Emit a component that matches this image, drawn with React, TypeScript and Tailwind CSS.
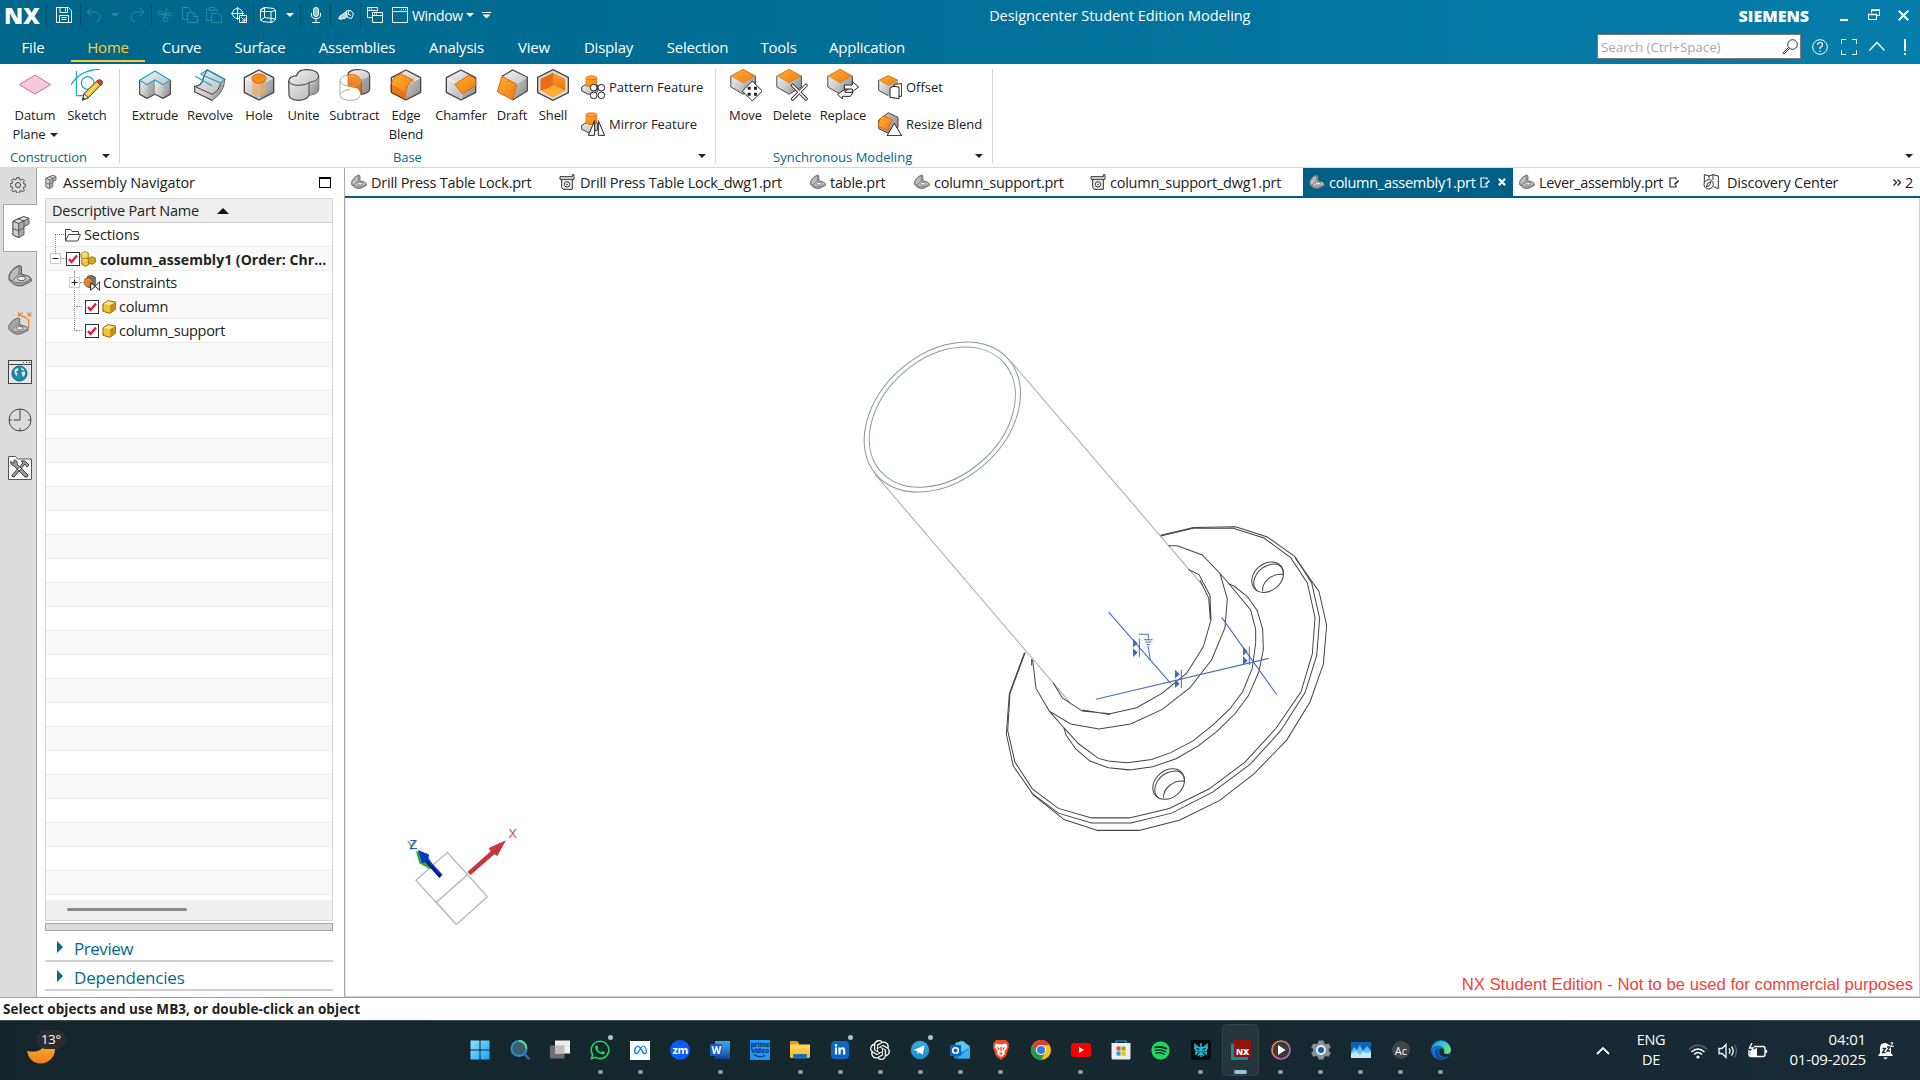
import React from "react";
import { FaWhatsapp, FaSpotify } from "react-icons/fa";
import { FaMeta, FaLinkedinIn } from "react-icons/fa6";
import { SiOpenai } from "react-icons/si";

/* ---------- shared gradients ---------- */
function Defs() {
  return (
    <svg className="absolute h-0 w-0" aria-hidden="true">
      <defs>
        <linearGradient id="gTop" x1="0" y1="0" x2="1" y2="1"><stop offset="0" stopColor="#f4f4f4" /><stop offset="1" stopColor="#c4c4c4" /></linearGradient>
        <linearGradient id="gL" x1="0" y1="0" x2="1" y2="1"><stop offset="0" stopColor="#f0f0f0" /><stop offset="1" stopColor="#b4b4b4" /></linearGradient>
        <linearGradient id="gR" x1="0" y1="0" x2="1" y2="1"><stop offset="0" stopColor="#c9c9c9" /><stop offset="1" stopColor="#8a8a8a" /></linearGradient>
        <linearGradient id="oA" x1="0" y1="0" x2="1" y2="1"><stop offset="0" stopColor="#ffb02e" /><stop offset="1" stopColor="#ee7a10" /></linearGradient>
        <linearGradient id="oB" x1="0" y1="0" x2="0" y2="1"><stop offset="0" stopColor="#f9a02c" /><stop offset="1" stopColor="#e0600a" /></linearGradient>
        <linearGradient id="moon" x1="0" y1="0" x2="0" y2="1"><stop offset="0" stopColor="#f9b233" /><stop offset="1" stopColor="#ef7d1a" /></linearGradient>
        <linearGradient id="win" x1="0" y1="0" x2="1" y2="1"><stop offset="0" stopColor="#8fe3ff" /><stop offset="1" stopColor="#1aa4f5" /></linearGradient>
        <linearGradient id="fold" x1="0" y1="0" x2="0" y2="1"><stop offset="0" stopColor="#ffd968" /><stop offset="1" stopColor="#f7b91e" /></linearGradient>
        <linearGradient id="edgeA" x1="0" y1="0" x2="1" y2="0.3"><stop offset="0" stopColor="#1b8fe0" /><stop offset="0.55" stopColor="#2fc3e0" /><stop offset="1" stopColor="#6be26a" /></linearGradient>
        <linearGradient id="media" x1="0" y1="0" x2="1" y2="1"><stop offset="0" stopColor="#ff8a1e" /><stop offset="1" stopColor="#b05bd8" /></linearGradient>
        <linearGradient id="tg" x1="0" y1="0" x2="0" y2="1"><stop offset="0" stopColor="#35ade1" /><stop offset="1" stopColor="#1c8bcb" /></linearGradient>
        <linearGradient id="red3" x1="0" y1="0" x2="1" y2="1"><stop offset="0" stopColor="#e85050" /><stop offset="1" stopColor="#a82020" /></linearGradient>
      </defs>
    </svg>
  );
}

const Caret = ({ className = "" }: { className?: string }) => (
  <svg className={`h-1 w-2 shrink-0 ${className}`} viewBox="0 0 8 4"><path d="M0 0h8L4 4z" fill="currentColor" /></svg>
);

/* ---------- ribbon icons, 96-unit boxes ---------- */
const HEX = "48,3 92,26 92,70 48,93 4,70 4,26";
const big = "h-8 w-8";

const Cube = ({ top = "url(#gTop)", left = "url(#gL)", right = "url(#gR)" }) => (
  <g>
    <path d="M4 26 48 3 92 26 48 48z" fill={top} />
    <path d="M4 26 48 48V93L4 70z" fill={left} />
    <path d="M92 26 48 48V93L92 70z" fill={right} />
    <path d="M4 26 48 48 92 26M48 48V93" fill="none" stroke="#fff" strokeWidth="2" />
    <polygon points={HEX} fill="none" stroke="#444" strokeWidth="4" strokeLinejoin="round" />
  </g>
);

const DatumIcon = () => (
  <svg className={big} viewBox="0 0 96 96"><path d="M1 47 48 18 95 47 48 75z" fill="#f7c9dc" stroke="#d9658f" strokeWidth="3" /></svg>
);
const SketchIcon = () => (
  <svg className={big} viewBox="0 0 96 96" fill="none">
    <path d="M16 6V80H52M0 48C16 20 46 2 86 1" stroke="#14a9d0" strokeWidth="3.5" />
    <circle cx="50" cy="42" r="19" stroke="#14a9d0" strokeWidth="3.5" />
    <path d="M35 93 39 74 76 37 89 48 52 86z" fill="#f4c83a" stroke="#3a3a3a" strokeWidth="3" />
    <path d="M45 80 82 43" stroke="#fbe68e" strokeWidth="4" />
    <path d="M35 93 39 74 52 86z" fill="#eee" stroke="#3a3a3a" strokeWidth="3" />
    <path d="M35 93 37 86 42 90z" fill="#222" />
    <path d="M76 37 82 33Q88 30 93 36T95 44L89 49z" fill="#e0403c" stroke="#3a3a3a" strokeWidth="2.5" />
  </svg>
);
const ExtrudeIcon = () => (
  <svg className={big} viewBox="0 0 96 96">
    <path d="M2 34 48 6 94 34 72 47 48 33 24 47z" fill="url(#gTop)" />
    <path d="M2 34 24 47V88L2 76z" fill="url(#gL)" /><path d="M24 47 48 33V76L24 88z" fill="url(#gR)" />
    <path d="M48 33 72 47V88L48 76z" fill="url(#gL)" /><path d="M72 47 94 34V76L72 88z" fill="url(#gR)" />
    <path d="M2 34V76L24 88 48 76 72 88 94 76V34" fill="none" stroke="#444" strokeWidth="3.5" />
    <path d="M2 34 48 6 94 34 72 47 48 33 24 47z" fill="none" stroke="#0ba7cf" strokeWidth="3.5" />
  </svg>
);
const RevolveIcon = () => (
  <svg className={big} viewBox="0 0 96 96">
    <path d="M40 3 92 31Q90 70 54 94L2 69 2 52Q22 50 26 34 30 16 40 3z" fill="url(#gL)" stroke="#444" strokeWidth="3.5" />
    <path d="M92 31Q90 70 54 94L54 76Q78 62 78 44z" fill="url(#gR)" />
    <path d="M2 52 54 76Q76 64 79 44" fill="none" stroke="#444" strokeWidth="3" />
    <path d="M20 16 40 2 93 31 80 42 20 16M4 22 54 50" fill="none" stroke="#0ba7cf" strokeWidth="3.5" />
  </svg>
);
const HoleIcon = () => (
  <svg className={big} viewBox="0 0 96 96">
    <Cube />
    <path d="M28 28V74Q48 86 68 74V28z" fill="#f2a65e" opacity=".6" />
    <ellipse cx="48" cy="29" rx="21" ry="14" fill="#f98d1a" stroke="#e0600a" strokeWidth="3" />
  </svg>
);
const UniteIcon = () => (
  <svg className={big} viewBox="0 0 96 96">
    <path d="M2 36Q4 22 26 20 30 1 58 2 92 4 92 22V62Q88 76 64 78 56 94 30 94 4 92 3 78z" fill="url(#gL)" stroke="#444" strokeWidth="3.5" />
    <path d="M64 48Q88 42 92 22V62Q88 76 64 78z" fill="url(#gR)" />
    <path d="M3 36Q6 48 30 49 56 48 64 40 88 38 92 22" fill="none" stroke="#444" strokeWidth="3" />
    <path d="M63 40V79" stroke="#444" strokeWidth="3" />
  </svg>
);
const SubtractIcon = () => (
  <svg className={big} viewBox="0 0 96 96">
    <path d="M26 18Q28 2 58 2 92 4 92 20V62Q88 74 66 76V40L30 22z" fill="url(#gR)" stroke="#444" strokeWidth="3.5" />
    <ellipse cx="60" cy="18" rx="30" ry="14" fill="url(#gTop)" />
    <path d="M3 36Q6 18 27 18V54Q60 54 65 76 56 94 34 94 8 94 3 80z" fill="#fff" />
    <path d="M27 16Q64 12 66 40V76Q62 58 50 56L27 52z" fill="url(#oB)" stroke="#e0600a" strokeWidth="2" />
    <path d="M3 36Q6 18 27 20M3 36V80Q8 94 34 94T64 78M3 36Q10 52 34 51T66 36M3 76Q14 62 34 62" fill="none" stroke="#a8a8a8" strokeWidth="3" />
  </svg>
);
const EdgeBlendIcon = () => (
  <svg className={big} viewBox="0 0 96 96">
    <Cube />
    <path d="M4 46Q8 20 34 15L70 34Q50 42 48 70V92L4 70z" fill="url(#oA)" stroke="#e0600a" strokeWidth="3" />
    <path d="M4 46 46 70V92L4 70z" fill="#e8650f" opacity=".65" />
    <path d="M4 44V70L48 93" fill="none" stroke="#5a3a20" strokeWidth="3" />
  </svg>
);
const ChamferIcon = () => (
  <svg className={big} viewBox="0 0 96 96">
    <Cube />
    <path d="M30 46 72 18 92 30V50L52 74z" fill="url(#oA)" stroke="#e0600a" strokeWidth="3" />
  </svg>
);
const DraftIcon = () => (
  <svg className={big} viewBox="0 0 96 96">
    <path d="M18 22 50 3 94 24 62 46z" fill="url(#gTop)" /><path d="M62 46 94 24V66L50 93z" fill="url(#gR)" />
    <path d="M18 22 62 46 50 93 4 68z" fill="url(#oA)" stroke="#e0600a" strokeWidth="3" />
    <path d="M18 22 50 3 94 24V66L50 93" fill="none" stroke="#444" strokeWidth="3.5" />
  </svg>
);
const ShellIcon = () => (
  <svg className={big} viewBox="0 0 96 96">
    <polygon points="48,2 94,25 94,71 48,94 2,71 2,25" fill="#dcdcdc" stroke="#444" strokeWidth="4" />
    <path d="M48 11 85 30V64L48 85 11 64V30z" fill="url(#oB)" />
    <path d="M48 11V46Q44 56 11 64V30z" fill="#ea6c14" /><path d="M11 64Q42 58 48 48L85 64 48 85z" fill="#ffae35" />
  </svg>
);
/* overlays sit in the lower right corner of a small block */
const SyncBase = () => (
  <g transform="scale(.82)">
    <path d="M3 26 48 1 93 26 48 52z" fill="url(#oA)" stroke="#c86410" strokeWidth="3" />
    <path d="M3 26 48 52V92L3 66z" fill="url(#gL)" /><path d="M93 26 48 52V92L93 66z" fill="url(#gR)" />
    <path d="M3 26V66L48 92 93 66V26" fill="none" stroke="#444" strokeWidth="3.5" />
  </g>
);
const MoveIcon = () => (
  <svg className={big} viewBox="0 0 96 96"><SyncBase />
    <path d="M67 36 97 66 67 96 37 66z" fill="#fff" stroke="#222" strokeWidth="3" strokeLinejoin="round" />
    <path d="M53 53h9v9h-9zM72 53h9v9h-9zM53 71h9v9h-9zM72 71h9v9h-9z" fill="#222" />
  </svg>
);
const DeleteIcon = () => (
  <svg className={big} viewBox="0 0 96 96"><SyncBase />
    <path d="M50 49 90 90M90 49 50 90" stroke="#222" strokeWidth="10" strokeLinecap="round" /><path d="M50 49 90 90M90 49 50 90" stroke="#fff" strokeWidth="5" strokeLinecap="round" />
  </svg>
);
const ReplaceIcon = () => (
  <svg className={big} viewBox="0 0 96 96"><SyncBase />
    <path d="M52 48H76V38L95 54 76 68V60H52zM78 70H54V60L32 76 46 90V82H70z" fill="#fff" stroke="#222" strokeWidth="3" />
  </svg>
);
const sm = "h-6 w-6 shrink-0";
const PatternIcon = () => (
  <svg className={sm} viewBox="0 0 72 72">
    <path d="M2 36 22 24 50 30V50L22 58 2 48z" fill="url(#gL)" stroke="#444" strokeWidth="3" />
    <path d="M15 8V32Q30 40 47 32V8z" fill="url(#oA)" stroke="#c86410" strokeWidth="2" /><ellipse cx="31" cy="8" rx="16" ry="6" fill="#fba435" stroke="#e0600a" strokeWidth="2" />
    {[[38, 38], [61, 38], [38, 61], [61, 61]].map(([x, y]) => <circle key={x + "," + y} cx={x} cy={y} r="10" fill="#fff" stroke="#222" strokeWidth="3" />)}
  </svg>
);
const MirrorIcon = () => (
  <svg className={sm} viewBox="0 0 72 72">
    <path d="M2 40 22 28 50 34V54L22 62 2 52z" fill="url(#gL)" stroke="#444" strokeWidth="3" />
    <path d="M15 8V34Q30 42 47 34V8z" fill="url(#oA)" stroke="#c86410" strokeWidth="2" /><ellipse cx="31" cy="8" rx="16" ry="6" fill="#fba435" stroke="#e0600a" strokeWidth="2" />
    <path d="M41 26V70H22zM52 26V70H71z" fill="#fff" stroke="#222" strokeWidth="3" />
  </svg>
);
const OffsetIcon = () => (
  <svg className={sm} viewBox="0 0 72 72">
    <path d="M2 16 31 2 60 16 31 32z" fill="url(#oA)" stroke="#c86410" strokeWidth="2.5" /><path d="M2 16 31 32V62L2 46z" fill="url(#gL)" /><path d="M60 16 31 32V62L60 46z" fill="url(#gR)" /><path d="M2 16V46L31 62" fill="none" stroke="#444" strokeWidth="3" />
    <path d="M49 34V28L71 26V64H63M36 40 45 34 63 36V71L36 67z" fill="#fff" stroke="#222" strokeWidth="3" />
  </svg>
);
const ResizeIcon = () => (
  <svg className={sm} viewBox="0 0 72 72">
    <path d="M2 24 31 2 60 16V46L31 64 2 50z" fill="url(#gR)" stroke="#444" strokeWidth="3" />
    <path d="M2 34Q6 14 18 12L44 24Q32 32 31 56L2 44z" fill="url(#oA)" stroke="#e0600a" strokeWidth="2.5" />
    <path d="M49 34 71 71H27z" fill="#fff" stroke="#222" strokeWidth="3" />
  </svg>
);

/* ---------- part / tree icons ---------- */
const PartIcon = ({ className = "h-4 w-4" }) => (
  <svg className={`${className} shrink-0`} viewBox="0 0 48 48">
    <path d="M2 32V22Q8 8 22 3L27 5V20L42 25Q48 29 47 34L30 43Q20 46 12 41z" fill="#a4a4a4" stroke="#5a5a5a" strokeWidth="2" />
    <path d="M3 32V22Q9 9 22 4V20L9 33z" fill="#bdbdbd" stroke="#5a5a5a" strokeWidth="1.5" />
    <path d="M22 20 42 25Q47 29 40 34T22 38 9 33z" fill="#c4c4c4" stroke="#5a5a5a" strokeWidth="1.5" />
    <ellipse cx="27" cy="29" rx="8" ry="4.5" fill="#ececec" stroke="#5a5a5a" strokeWidth="2" />
  </svg>
);
const DwgIcon = () => (
  <svg className="h-4 w-4 shrink-0" viewBox="0 0 48 48" fill="none" stroke="#333" strokeWidth="3">
    <path d="M3 8H40V2H45V16H40V46H12L8 40V16H3z" fill="#e8e8e8" /><path d="M8 16H40" /><circle cx="24" cy="31" r="8" fill="#fff" /><circle cx="24" cy="31" r="1.500" />
  </svg>
);
const EditIcon = () => (
  <svg className="h-[11px] w-[10px] shrink-0" viewBox="0 0 10 11" fill="none" stroke="currentColor" strokeWidth="1.2"><path d="M7 2.500V1H1v9h6V8" /><path d="M9.500 3.500 5.500 7.500" strokeWidth="1.600" /></svg>
);
const YellowCube = () => (
  <svg className="h-[14px] w-[14px] shrink-0" viewBox="0 0 42 42">
    <path d="M3 12 17 2 40 6V28L24 40 3 34z" fill="#f2c230" stroke="#8a6508" strokeWidth="3" strokeLinejoin="round" />
    <path d="M5 12 18 4 38 8 24 16z" fill="#fbe88a" /><path d="M24 16 38 8V27L24 38z" fill="#c48e10" />
  </svg>
);
const AsmYellow = () => (
  <svg className="h-4 w-4 shrink-0" viewBox="0 0 48 48" stroke="#8a6508" strokeWidth="2.5" strokeLinejoin="round">
    <path d="M3 8 13 2 25 6V20L13 25 3 20z" fill="#f7d558" /><path d="M5 27 15 22 27 26V40L16 46 5 40z" fill="#f2c230" /><path d="M25 22 35 17 46 21V34L36 40 25 36z" fill="#d9a41c" />
    <path d="M6 27 15 23 25 27 16 31zM4 9 13 4 23 7 14 11z" fill="#fbe88a" stroke="none" />
  </svg>
);
const Check = () => (
  <svg className="h-[14px] w-[14px] shrink-0" viewBox="0 0 14 14"><rect x=".5" y=".5" width="13" height="13" fill="#fff" stroke="#333" /><path d="M3 7 5.5 10 11 3.5" fill="none" stroke="#e8123c" strokeWidth="2.2" /></svg>
);
const AsmGrey = ({ className = "" }) => (
  <svg className={className} viewBox="0 0 54 66" stroke="#444" strokeWidth="2.5" strokeLinejoin="round">
    <path d="M3 16 18 8 35 2 51 7V24L36 32V56L20 65 3 57z" fill="#a8a8a8" />
    <path d="M3 16 35 2 51 7 20 22z" fill="#e4e4e4" /><path d="M3 16 20 22V65L3 57z" fill="#cfcfcf" /><path d="M3 38 20 44 36 36M19 9 36 15V32" fill="none" />
  </svg>
);
const Expander = ({ plus = false }) => (
  <svg className="h-[11px] w-[11px] shrink-0" viewBox="0 0 11 11"><rect x=".5" y=".5" width="10" height="10" fill="#fff" stroke="#ccc" /><path d={plus ? "M2.5 5.5h6M5.5 2.5v6" : "M2.5 5.5h6"} stroke="#222" /></svg>
);

/* ---------- title bar ---------- */
const qi = "h-4 w-4";
const Sep = () => <div className="h-[22px] w-px shrink-0 bg-[#00506d]" />;
const Cell = ({ w, children }: { w: string; children?: React.ReactNode }) => <div className={`flex shrink-0 items-center justify-center ${w}`}>{children}</div>;

function TitleBar() {
  return (
    <div className="flex h-[30px] items-center text-white">
      <div className="flex w-[46px] shrink-0 justify-start pl-1 font-['Open_Sans'] text-[23px] leading-none font-extrabold">NX</div>
      <Sep />
      <Cell w="w-[33px]"><svg className={qi} viewBox="0 0 16 16" fill="none" stroke="#fff"><path d="M.5.5h12l3 3v12H.5zM4 .5v5h7.500v-5M9.500 1.500v3M3.500 15.500v-7h9v7M5.500 10.500h5M5.500 12.500h5" /></svg></Cell>
      <Sep />
      <div className="-ml-px flex items-center text-[#3287a3]">
        <Cell w="w-7"><svg className={qi} viewBox="0 0 16 16" fill="none" stroke="currentColor"><path d="M5 1 1 5l4 4M1 5h8a5 5 0 0 1 5 5q0 4-4 5" /></svg></Cell>
        <Cell w="w-3.5"><Caret /></Cell>
        <Cell w="w-[29px]"><svg className={qi} viewBox="0 0 16 16" fill="none" stroke="currentColor"><path d="m11 1 4 4-4 4M15 5H7a5 5 0 0 0-5 5q0 4 4 5" /></svg></Cell>
        <Sep />
        <Cell w="w-[26px]"><svg className={qi} viewBox="0 0 16 16" fill="none" stroke="currentColor"><circle cx="3" cy="6" r="2" /><circle cx="8.500" cy="12.500" r="2.300" /><path d="M5 7l10-1M4 7.500 15 9M7 10.500 10 1" /></svg></Cell>
        <Cell w="w-6"><svg className={qi} viewBox="0 0 16 16" fill="none" stroke="currentColor"><path d="M5.500 12.500h-5V.5h6l3 3v1M5.500 5.500h6l4 4v6h-10zM11.500 5.500v4h4" /></svg></Cell>
        <Cell w="w-6"><svg className={qi} viewBox="0 0 16 16" fill="none" stroke="currentColor"><path d="M5.500 13.500h-5v-11h3v-2h5v2h3v2M5.500 6.500h6l4 3v6h-10zM3.500 3.500h5" /></svg></Cell>
      </div>
      <Cell w="w-[25px]"><svg className={qi} viewBox="0 0 16 16" fill="none" stroke="#fff"><circle cx="6.500" cy="6.500" r="5" /><path d="M6.500 0v13M0 6.500h13" /><path d="M8.500 8.500h7v7h-7z" fill="#00688c" /><path d="m10 10 4 4m0-3v3h-3" /></svg></Cell>
      <Cell w="w-0.5" /><Sep />
      <Cell w="w-[27px]"><svg className={qi} viewBox="0 0 16 16" fill="none" stroke="#fff"><path d="M4.500.5 14 1.500l1.500 2v9L12 15.500 2 14.500l-1.500-3v-9zM.5 3.500l4-3v10l-4 3M4.500 10.500l11 1.500M.5 4.500H11v10.500M11 4.500l4.500-1" /></svg></Cell>
      <Cell w="w-[17px]"><Caret /></Cell>
      <Cell w="w-0.5" /><Sep />
      <Cell w="w-[29px]"><svg className={qi} viewBox="0 0 16 16" fill="none" stroke="#fff"><rect x="5.500" y=".5" width="5" height="9" rx="2.500" fill="#8fc0d2" /><path d="M3.500 6v2q0 3.500 4.500 3.500T12.500 8V6M8 11.500v4M4 15.500h8" /></svg></Cell>
      <Sep />
      <Cell w="w-[29px]"><svg className={qi} viewBox="0 0 16 16" fill="none" stroke="#fff"><path d="M.5 11.500Q1.500 8.500 5 7L8.500 4.500l.5 2.500-1.500 2L9 9.500 6 12 5 11 3 12.500z" fill="#a9cfdc" /><path d="M8 4 13 3.500l2.500 3.500-2 4.500-4-1z" /><path d="m11 4-1 3 3 1.500" /></svg></Cell>
      <Sep />
      <Cell w="w-7"><svg className={qi} viewBox="0 0 16 16" fill="none" stroke="#fff"><path d="M5.500 10.500h-5V.5h10v4M.5 3.500h10M5.500 5.500h10v10h-10zM5.500 8.500h10M7 7h1M9 7h1M2 2h1M4 2h1" /></svg></Cell>
      <Cell w="w-[21px]"><svg className={qi} viewBox="0 0 16 16" fill="none" stroke="#fff"><path d="M.5.5h15v15H.5zM.5 4.500h15M9 2.500h1M11 2.500h1M13 2.500h1" /></svg></Cell>
      <span className="ml-[2px] w-[50px] text-[14px] tracking-[-0.35px]">Window</span>
      <Caret className="ml-1" />
      <svg className="ml-2 h-[7px] w-[9px]" viewBox="0 0 9 7"><path d="M0 .5h9" stroke="#fff" /><path d="M.5 2.500h8L4.500 6.500z" fill="#fff" /></svg>
      <div className="flex flex-1 justify-center pt-px pl-2.5 text-[14.5px] tracking-[-0.06px]">Designcenter Student Edition Modeling</div>
      <div className="mt-0.5 mr-[31px] font-['Open_Sans'] text-[16px] leading-none font-extrabold">SIEMENS</div>
      <div className="flex w-[80px] shrink-0 items-center pr-2.5">
        <div className="mt-2.5 h-0.5 w-2 bg-white" />
        <svg className="ml-5 h-3 w-3" viewBox="0 0 12 12" fill="none" stroke="#fff"><path d="M3.500 4V1.500h8v5H9M.5 5.500h8v5h-8z" /><path d="M3 1h9M0 5.500h9" strokeWidth="1.500" /></svg>
        <svg className="ml-[18px] h-[11px] w-[11px]" viewBox="0 0 11 11" stroke="#fff" strokeWidth="2"><path d="m.7.7 9.600 9.600M10.300.7.7 10.300" /></svg>
      </div>
    </div>
  );
}

function MenuBar() {
  const items: [string, string][] = [
    ["File", "w-[66px] mr-[5px]"], ["Home", "w-[74px]"], ["Curve", "w-[73px]"], ["Surface", "w-[84px]"], ["Assemblies", "w-[110px]"],
    ["Analysis", "w-[89px]"], ["View", "w-[66px]"], ["Display", "w-[83px]"], ["Selection", "w-[95px]"], ["Tools", "w-[67px]"], ["Application", "w-[110px]"],
  ];
  return (
    <div className="flex h-[34px] items-start text-[15px] text-white">
      {items.map(([t, w]) => (
        <div key={t} className={`flex h-8 shrink-0 items-center justify-center pt-1 tracking-[-0.2px] ${w} ${t === "Home" ? "border-b-2 border-[#ffcb3d] text-[#ffcb3d]" : "border-b-2 border-transparent"}`}>{t}</div>
      ))}
      <div className="mt-1 ml-auto flex h-[25px] w-[204px] items-center border border-[#7a7a7a] bg-white pr-0.5 pl-[3px] text-[13.5px] tracking-[-0.1px] text-[#a8a8a8]">
        <span className="flex-1 pt-px">Search (Ctrl+Space)</span>
        <svg className="h-4 w-4" viewBox="0 0 16 16" fill="none" stroke="#333"><circle cx="10.500" cy="5.500" r="4.800" /><path d="M6.500 8.500.8 14.200l1 1L7.500 9.500" /></svg>
      </div>
      <div className="flex h-[33px] w-[119px] shrink-0 items-center pl-[11px]">
        <svg className={qi} viewBox="0 0 16 16" fill="none" stroke="#fff"><circle cx="8" cy="8" r="7.300" /><path d="M5.500 6q0-2.500 2.500-2.500T10.500 6q0 1.500-2.500 2.500V10M8 11.500V13" strokeWidth="1.200" /></svg>
        <svg className={`${qi} ml-[13px]`} viewBox="0 0 16 16" fill="none" stroke="#fff"><path d="M.5 5V.5H5M11 .5h4.500V5M15.500 11v4.500H11M5 15.500H.5V11" /></svg>
        <svg className={`${qi} ml-3`} viewBox="0 0 16 16" fill="none" stroke="#fff" strokeWidth="1.200"><path d="m.5 11.500 7.500-8 7.500 8" /></svg>
        <div className="ml-[19px] flex flex-col gap-0.5"><div className="h-3 w-0.5 bg-white" /><div className="h-0.5 w-0.5 bg-white" /></div>
      </div>
    </div>
  );
}

/* ---------- ribbon ---------- */
const Tool = ({ w, icon, l1, l2, caret }: { w: string; icon: React.ReactNode; l1: string; l2?: string; caret?: boolean }) => (
  <div className={`flex shrink-0 flex-col items-center ${w}`}>
    {icon}
    <div className="mt-[5px] h-[19px] leading-[19px] whitespace-nowrap">{l1}</div>
    {l2 && <div className="flex h-[19px] items-center gap-1 leading-[19px]">{l2}{caret && <Caret />}</div>}
  </div>
);
const Group = ({ w, label, pad, children }: { w: string; label: string; pad: string; children: React.ReactNode }) => (
  <div className={`flex h-[94px] shrink-0 flex-col justify-between border-r border-[#d4d4d4] ${w}`}>
    <div className="flex h-[79px]">{children}</div>
    <div className="flex h-[15px] items-center pr-[9px] leading-none text-[#06688e]"><span className={`flex-1 pt-[3px] ${pad}`}>{label}</span><Caret className="text-[#222]" /></div>
  </div>
);
const Small = ({ icon, t }: { icon: React.ReactNode; t: string }) => <div className="flex h-6 items-center gap-1 tracking-[-0.03px] whitespace-nowrap">{icon}<span className="pt-px">{t}</span></div>;

function Ribbon() {
  return (
    <div className="flex h-[104px] items-start border-b border-[#d8d8d8] bg-white pt-[5px] text-[13px] tracking-[-0.1px] text-[#222]">
      <Group w="w-[120px]" label="Construction" pad="pl-2.5">
        <Tool w="w-[70px]" icon={<DatumIcon />} l1="Datum" l2="Plane" caret />
        <Tool w="w-[34px]" icon={<SketchIcon />} l1="Sketch" />
      </Group>
      <Group w="w-[596px]" label="Base" pad="pl-[273px]">
        <Tool w="w-[60px] ml-[5px]" icon={<ExtrudeIcon />} l1="Extrude" />
        <Tool w="w-[50px]" icon={<RevolveIcon />} l1="Revolve" />
        <Tool w="w-[48px]" icon={<HoleIcon />} l1="Hole" />
        <Tool w="w-[41px]" icon={<UniteIcon />} l1="Unite" />
        <Tool w="w-[61px]" icon={<SubtractIcon />} l1="Subtract" />
        <Tool w="w-[42px]" icon={<EdgeBlendIcon />} l1="Edge" l2="Blend" />
        <Tool w="w-[68px]" icon={<ChamferIcon />} l1="Chamfer" />
        <Tool w="w-[34px]" icon={<DraftIcon />} l1="Draft" />
        <Tool w="w-[48px]" icon={<ShellIcon />} l1="Shell" />
        <div className="ml-1 flex flex-col gap-[13px] pt-1.5"><Small icon={<PatternIcon />} t="Pattern Feature" /><Small icon={<MirrorIcon />} t="Mirror Feature" /></div>
      </Group>
      <Group w="w-[277px]" label="Synchronous Modeling" pad="pl-[57px] tracking-[0.03px]">
        <Tool w="w-[59px]" icon={<MoveIcon />} l1="Move" />
        <Tool w="w-[34px]" icon={<DeleteIcon />} l1="Delete" />
        <Tool w="w-[68px]" icon={<ReplaceIcon />} l1="Replace" />
        <div className="ml-px flex flex-col gap-[13px] pt-1.5"><Small icon={<OffsetIcon />} t="Offset" /><Small icon={<ResizeIcon />} t="Resize Blend" /></div>
      </Group>
      <Caret className="mt-[85px] mr-[7px] ml-auto" />
    </div>
  );
}

/* ---------- left rail ---------- */
function Rail() {
  return (
    <div className="flex w-[37px] shrink-0 flex-col items-center bg-[#dcdcdc]">
      <div className="flex h-9 w-full items-center justify-center border-r border-[#a8a8a8] pb-0.5">
        <svg className="h-4 w-4" viewBox="0 0 16 16" fill="none" stroke="#444"><path d="M6.800.6h2.400l.4 2 1.500.6 1.700-1.100 1.600 1.600-1.100 1.700.6 1.500 2 .4v2.200l-2 .5-.6 1.500 1.100 1.700-1.600 1.600-1.700-1.100-1.500.6-.4 2H6.800l-.4-2-1.500-.6-1.700 1.100-1.600-1.600 1.100-1.700-.6-1.500-2-.5V6.800l2-.4.6-1.500-1.100-1.700 1.600-1.600 1.700 1.100 1.500-.6z" /><circle cx="8" cy="8" r="2.500" /></svg>
      </div>
      <div className="flex h-12 w-full pl-[3px]"><div className="flex h-12 flex-1 items-center justify-center border-y border-l border-[#a8a8a8] bg-white"><AsmGrey className="mb-0.5 h-[22px] w-[18px]" /></div></div>
      <div className="flex w-full flex-1 flex-col items-center border-r border-[#a8a8a8] pl-1">
        <div className="flex h-12 items-center"><PartIcon className="h-6 w-6" /></div>
        <div className="flex h-12 items-center">
          <svg className="h-6 w-6" viewBox="0 0 72 72"><g transform="translate(0 14) scale(1.300 1.200)"><path d="M2 32V22Q8 8 22 3L27 5V20L42 25Q48 29 47 34L30 43Q20 46 12 41z" fill="#a4a4a4" stroke="#5a5a5a" strokeWidth="2" /><path d="M22 20 42 25Q47 29 40 34T22 38 9 33z" fill="#c4c4c4" stroke="#5a5a5a" strokeWidth="1.500" /><ellipse cx="27" cy="29" rx="8" ry="4.500" fill="#ececec" stroke="#5a5a5a" strokeWidth="2" /></g><path d="M32 1V13M44 2 33 9 46 15M58 2 70 14M70 2 58 14M46 12 58 22M62 20V48" stroke="#f07d14" strokeWidth="3.500" fill="none" /></svg>
        </div>
        <div className="flex h-12 items-center">
          <svg className="h-6 w-6" viewBox="0 0 24 24" fill="none" stroke="#444"><rect x=".5" y=".5" width="23" height="23" fill="#e6e6e6" /><path d="M.5 4.500h23M15 2.500h1M18 2.500h1M21 2.500h1" /><circle cx="11.500" cy="13.500" r="7.500" fill="#1a8cab" stroke="#0f5f7c" /><path d="M6.500 10q2-2.500 4-1.500l-.5 2-2 1 1.500 2-1 3q-2.500-3-2-6.500zM13 7.500l3.500 2-1 1-2-.5zM13.500 12l3-.5 1 2-2 3.500-1.500-2z" fill="#d5edf3" stroke="none" /></svg>
        </div>
        <div className="flex h-12 items-center"><svg className="h-6 w-6" viewBox="0 0 24 24" fill="none" stroke="#444"><circle cx="12" cy="12" r="11" /><path d="M12 1v11H5.500M1 12h3M20 12h3M12 20v3" /></svg></div>
        <div className="flex h-12 items-center">
          <svg className="h-6 w-6" viewBox="0 0 24 24"><path d="M.5 23.500V.5h7l2 2.500h14v20.500z" fill="#fff" stroke="#555" /><path d="M3 5q-1 4 3 5L17 21q3 1 3-2L9 8q1-4-3-4v3L4 7zM13 5q5-1 6 2l2 2-2 2-2-3L6 21q-3 0-2-2L15 7z" fill="#999" stroke="#333" strokeWidth=".9" /></svg>
        </div>
      </div>
    </div>
  );
}

/* ---------- navigator ---------- */
const dotH = "h-px border-t border-dotted border-[#888] shrink-0";
function Navigator() {
  const rows: React.ReactNode[] = [
    <div className="flex items-center pl-2"><div className={`${dotH} ml-px w-[9px]`} /><svg className="ml-px h-4 w-4" viewBox="0 0 16 16" fill="none" stroke="#444"><path d="M.5 14V2.500h5l1.500 2h6.500v3M.5 14 3.500 7.500h12L12.500 14z" /></svg><span className="ml-[3px] tracking-[-0.1px]">Sections</span></div>,
    <div className="flex items-center pl-1"><Expander /><div className={`${dotH} w-[5px]`} /><Check /><AsmYellow /><span className="ml-1 text-[14px] font-bold tracking-[0.04px]">column_assembly1 (Order: Chr...</span></div>,
    <div className="flex items-center pl-[23px]"><Expander plus /><div className={`${dotH} w-1`} />
      <svg className="h-4 w-4" viewBox="0 0 48 48"><path d="M10 4 22 1 34 6V36L20 40 8 34z" fill="#777" stroke="#333" strokeWidth="2" /><path d="M2 12 14 8 24 13V32L12 36 2 30z" fill="#f08222" stroke="#8a4a10" strokeWidth="2" /><path d="M20 24 34 34 20 46zM47 20V46L34 34z" fill="#fff" stroke="#222" strokeWidth="3" /></svg>
      <span className="ml-[3px] tracking-[-0.33px]">Constraints</span></div>,
    <div className="flex items-center pl-7"><div className={`${dotH} ml-0.5 mr-[3px] w-1.5`} /><Check /><span className="w-[3px]" /><YellowCube /><span className="ml-[3px] tracking-[-0.25px]">column</span></div>,
    <div className="flex items-center pl-7"><div className={`${dotH} ml-0.5 mr-[3px] w-1.5`} /><Check /><span className="w-[3px]" /><YellowCube /><span className="ml-[3px] tracking-[-0.3px]">column_support</span></div>,
  ];
  return (
    <div className="flex w-[307px] shrink-0 flex-col bg-white px-2 text-[14.5px] text-[#222]">
      <div className="flex h-[30px] items-center"><AsmGrey className="mb-0.5 h-[14px] w-[12px]" /><span className="mb-px ml-1.5 flex-1 tracking-[-0.1px]">Assembly Navigator</span><div className="mr-[5px] mb-0.5 h-[11px] w-3 border border-t-2 border-black" /></div>
      <div className="flex h-[723px] w-[288px] shrink-0 flex-col border border-[#d6d6d6]">
        <div className="flex h-6 shrink-0 items-center border-b border-[#cfcfcf] bg-[#efefef] pt-px pl-1.5 leading-none tracking-[-0.2px]">Descriptive Part Name<svg className="ml-[18px] h-1.5 w-3" viewBox="0 0 12 6"><path d="M0 6h12L6 0z" fill="#111" /></svg></div>
        <div className="relative">
          {Array.from({ length: 28 }, (_, i) => (
            <div key={i} className={`h-6 overflow-hidden border-b border-[#ececec] whitespace-nowrap [&>div]:h-[23px] [&>div>span]:pt-px ${i % 2 ? "bg-[#fafafa]" : "bg-white"}`}>{rows[i]}</div>
          ))}
          <div className="absolute top-3 left-[9px] h-[19px] w-px border-l border-dotted border-[#888]" />
          <div className="absolute top-12 left-7 h-1.5 w-px border-l border-dotted border-[#888]" />
          <div className="absolute top-[67px] left-7 h-[41px] w-px border-l border-dotted border-[#888]" />
        </div>
        <div className="mt-auto flex h-5 shrink-0 items-center bg-[#efefef] pb-0.5 pl-[21px]"><div className="h-[3px] w-[120px] rounded-full bg-[#888]" /></div>
      </div>
      <div className="mt-0.5 h-2 w-[288px] shrink-0 border border-[#a4a4a4] bg-[#dcdcdc]" />
      {["Preview", "Dependencies"].map((t) => (
        <div key={t} className={`flex w-[288px] shrink-0 items-center border-b-2 border-[#d0d0d0] pl-3 text-[17px] leading-none text-[#06688e] ${t === "Preview" ? "h-[31px] pt-[5px] tracking-[-0.45px]" : "h-[29px] pt-1 tracking-[-0.17px]"}`}>
          <svg className="mb-[3px] h-3 w-1.5" viewBox="0 0 6 12"><path d="M0 0 6 6 0 12z" fill="#06688e" /></svg><span className="ml-[11px]">{t}</span>
        </div>
      ))}
    </div>
  );
}

/* ---------- tabs ---------- */
function TabBar() {
  const tab = "flex shrink-0 items-center whitespace-nowrap h-full gap-1 [&>span]:pt-px";
  return (
    <div className="flex h-[30px] shrink-0 items-center border-b-2 border-[#005f87] pl-px text-[14.5px] tracking-[-0.24px] text-[#222]">
      <div className={`${tab} w-[208px] pl-[5px]`}><PartIcon /><span>Drill Press Table Lock.prt</span></div>
      <div className={`${tab} w-[251px] pl-[5px]`}><DwgIcon /><span className="ml-px">Drill Press Table Lock_dwg1.prt</span></div>
      <div className={`${tab} w-[104px] pl-[5px]`}><PartIcon /><span>table.prt</span></div>
      <div className={`${tab} w-[176px] pl-[5px]`}><PartIcon /><span>column_support.prt</span></div>
      <div className={`${tab} w-[218px] pl-[5px]`}><DwgIcon /><span>column_support_dwg1.prt</span></div>
      <div className={`${tab} w-[210px] bg-[#005f87] pl-1.5 tracking-[-0.28px] text-white`}><PartIcon /><span className="flex-1">column_assembly1.prt</span><EditIcon /><svg className="mr-[7px] ml-1 h-2 w-2" viewBox="0 0 8 8" stroke="#fff" strokeWidth="2.200"><path d="m.8.8 6.400 6.400M7.200.8.8 7.200" /></svg></div>
      <div className={`${tab} w-[186px] pl-1.5 tracking-[-0.35px]`}><PartIcon /><span className="w-[126px]">Lever_assembly.prt</span><EditIcon /></div>
      <div className={`${tab} w-[194px] pl-1`}>
        <svg className="h-4 w-4 shrink-0" viewBox="0 0 48 48" fill="none" stroke="#333" strokeWidth="3"><path d="M4 24V2L18 6 30 2 46 6V44L32 38M30 2V18M18 6v8" /><circle cx="17" cy="31" r="14" fill="#fff" /><path d="m24 23-10 5-4 11 10-5z" /></svg><span className="ml-1 tracking-[-0.2px]">Discovery Center</span></div>
      <svg className="mt-px h-[7px] w-2" viewBox="0 0 8 7" fill="none" stroke="#222" strokeWidth="1.300"><path d="m.5.5 3 3-3 3M4.500.5l3 3-3 3" /></svg><span className="ml-1 pt-px">2</span>
    </div>
  );
}

/* ---------- model view ---------- */
const Constraint = ({ x, y }: { x: number; y: number }) => (
  <g transform={`translate(${x} ${y})`}><path d="M0 0 14 13 0 26zM0 28 14 41 0 54z" fill="#4468b2" stroke="none" /><path d="M19 0V54" stroke="#4468b2" strokeWidth="3" /></g>
);
const BoltHole = () => (
  <g>
    <ellipse cx="1283" cy="761" rx="52" ry="40" transform="rotate(-39 1283 761)" />
    <path d="M1252 802C1228 780 1248 740 1280 727S1332 728 1330 756" />
    <path d="M1268 803C1265 772 1300 748 1331 753" />
  </g>
);
function Viewport() {
  return (
    <div className="relative min-h-0 flex-1 border-r border-b border-l border-[#d0d0d0] border-l-[#e4e4e4] bg-white">
      <svg className="block h-[798px] w-[1573px]" viewBox="346 198 1573 798" fill="none">
        <g transform="translate(840 320) scale(.33333 .338)" stroke="#444" strokeWidth="3">
          <g stroke="#8c9898">
            <ellipse cx="307" cy="287" rx="262" ry="189" transform="rotate(-40 307 287)" />
            <ellipse cx="307" cy="287.500" rx="245" ry="176" transform="rotate(-40 307 287.500)" />
            <path d="M105 456 690 1132M512 122 1088 785" stroke="#a5adab" />
          </g>
          <path d="M962 639 1060 616H1180L1272 645 1352 703 1402 778 1425 880 1417 988 1383 1100 1308 1208 1215 1308 1108 1387 988 1445 868 1473H755L655 1445 577 1387 525 1308 503 1215 510 1105 556 983" />
          <path d="M962 637 1060 614 1187 612 1282 642 1365 700 1415 778 1439 883 1430 993 1395 1103 1322 1215 1230 1315 1118 1397 995 1459 873 1488H755L655 1459 575 1400" />
          <path d="M1365 703 1437 803 1460 903 1450 1018 1410 1130 1340 1243 1242 1343 1138 1422 1018 1480 897 1510H773L672 1478 580 1405 520 1320 499 1225 508 1105 553 985" />
          <path d="M985 668H1012L1087 695 1140 750 1162 825 1155 910 1115 1005 1050 1088 967 1152 872 1195 777 1210 692 1195 628 1157 588 1090 578 1006M1140 750 1165 778M628 1157 672 1207M575 1003V1022" />
          <path d="M1165 778 1232 858 1247 915V955L1237 1030 1208 1100 1170 1150 1120 1197 1058 1246 992 1280 935 1300 862 1310 805 1305 775 1297 715 1253 672 1207" />
          <path d="M1165 780 1182 787 1222 818 1252 860 1268 915 1270 975 1257 1040 1225 1112 1185 1165 1130 1218 1075 1260 1008 1298 938 1322 868 1331 805 1325 750 1305 708 1270 678 1228 672 1207" />
          <path d="M1045 738 1077 753 1110 815 1113 887 1090 967 1040 1045 967 1104 890 1147 810 1165 727 1157 667 1118 640 1075M1080 770 1106 822 1111 887M727 1154 810 1167" />
          <BoltHole />
          <g transform="translate(-297 612)"><BoltHole /></g>
          <g stroke="#4a70bd">
            <path d="M806 864 992 1075M768 1122 1286 1001M1145 880 1310 1108" strokeWidth="3.500" />
            <path d="M896 930H925V946M912 946H938M916 953H934M920 960H930M924 964 931 1004H926" strokeWidth="3" />
          </g>
          <Constraint x={879} y={943} /><Constraint x={1005} y={1035} /><Constraint x={1209} y={967} />
        </g>
        <g transform="translate(380 810) scale(.33333)">
          <path d="M202 127 322 260 229 344 108 211zM265 192 170 276M108 211 229 344 165 272" stroke="#b4b4b4" strokeWidth="4" />
          <path d="M108 124 118 160 150 178 160 170 140 130z" fill="#2fa82f" />
          <path d="M262 186 332 124 326 114 378 91 352 138 343 133 272 195z" fill="url(#red3)" />
          <path d="M114 120 148 134 144 146 188 194 178 203 136 156 126 160z" fill="#0b36d6" /><path d="M136 156 178 203 184 198 140 150z" fill="#061c80" />
        </g>
        <g fontFamily="Liberation Sans" fontSize="12.500"><text x="508.500" y="838" fill="#d84848">X</text><text x="407" y="850" fill="#3cb43c">Y</text><text x="409.500" y="849" fill="#2050e0">Z</text></g>
      </svg>
      <div className="absolute right-[6px] -bottom-px font-['Liberation_Sans'] text-[16.68px] leading-[24px] whitespace-nowrap text-[#f04438]">NX Student Edition - Not to be used for commercial purposes</div>
    </div>
  );
}

/* ---------- taskbar ---------- */
const ti = "h-5 w-5";
const apps: { icon: React.ReactNode; run?: boolean; badge?: boolean; active?: boolean }[] = [
  { icon: <svg className={ti} viewBox="0 0 20 20" fill="url(#win)"><path d="M.5.5h9v9h-9zM10.500.5h9v9h-9zM.5 10.500h9v9h-9zM10.500 10.500h9v9h-9z" /></svg> },
  { icon: <svg className={ti} viewBox="0 0 20 20" fill="none"><circle cx="9" cy="8.500" r="7.500" fill="#3d6068" stroke="#2a90d8" strokeWidth="2" /><path d="M9 1a7.500 7.500 0 0 1 7.500 7.500" stroke="#62d990" strokeWidth="2" /><path d="m14.500 14 4 4.500" stroke="#1d78cc" strokeWidth="2.500" strokeLinecap="round" /></svg> },
  { icon: <svg className={ti} viewBox="0 0 20 20"><path d="M0 5.500h14.500V18.500H0z" fill="#6f6d6d" /><path d="M5 .5h15v13H5z" fill="#eee" /><path d="M5 5.500h9.500v8H5z" fill="#bdbdbd" /></svg> },
  { icon: <FaWhatsapp className="h-[22px] w-[22px] text-[#25d366]" />, run: true, badge: true },
  { icon: <div className="flex h-[19px] w-5 items-center justify-center bg-white"><FaMeta className="h-3 w-[13px] text-[#0a7cff]" /></div>, run: true },
  { icon: <div className="flex h-5 w-5 items-center justify-center rounded-full bg-[#0b5cff] pb-0.5 text-[11px] leading-none font-bold tracking-[-0.5px] text-white">zm</div> },
  { icon: <div className="flex h-[18px] w-5 items-center"><div className="z-10 flex h-3 w-3 shrink-0 items-center justify-center bg-[#185abd] text-[10px] leading-none font-bold text-white">W</div><div className="-ml-[7px] h-[18px] w-[15px] bg-linear-to-b from-[#41a5ee] via-[#2b7cd3] to-[#103f91]" /></div>, run: true },
  { icon: <div className="flex h-5 w-5 flex-col items-center overflow-hidden bg-[#1a98ff] text-[6.500px] leading-[6px] font-bold text-[#0a2a4a]"><span className="mt-0.5">prime</span><span>video</span><svg className="h-1 w-3" viewBox="0 0 12 4" fill="none" stroke="#0a2a4a" strokeWidth="1.200"><path d="M0 .5q5 4 11 1" /></svg></div> },
  { icon: <svg className={ti} viewBox="0 0 20 20"><path d="M0 2q0-1 1-1h6l2 2v3H0z" fill="#e0a010" /><path d="M0 4.500h20V17q0 1-1 1H1q-1 0-1-1z" fill="url(#fold)" /><path d="M3 18.500V15q0-1 1-1h12q1 0 1 1v3.500z" fill="#1779c6" /><path d="M5.500 16h9" stroke="#0c4f91" /></svg>, run: true },
  { icon: <div className="flex h-[18px] w-[18px] items-center justify-center rounded-sm bg-[#0a66c2]"><FaLinkedinIn className="h-3 w-3 text-white" /></div>, run: true, badge: true },
  { icon: <SiOpenai className="h-5 w-5 text-white" />, run: true },
  { icon: <svg className={ti} viewBox="0 0 20 20"><circle cx="10" cy="10" r="9.200" fill="url(#tg)" /><path d="m3.500 10 11-4.600-1.800 9.300-3.400-2.200-1.600 1.500-.5-3z" fill="#fff" /></svg>, run: true, badge: true },
  { icon: <svg className={ti} viewBox="0 0 20 20"><path d="M2 6 11 .5 20 6v12.500H4z" fill="#1a7bd6" /><path d="m5 3 8-2 7 6-8 5z" fill="#5cc8f7" /><path d="M20 7v11.500H7z" fill="#37b0f0" /><rect y="5" width="11" height="11" rx="1" fill="#0f62b8" /><circle cx="5.500" cy="10.500" r="2.800" fill="none" stroke="#fff" strokeWidth="1.600" /></svg>, run: true },
  { icon: <svg className={ti} viewBox="0 0 20 20"><path d="M5 0h10l2 2.500 1 1-.5 3 .3 1L15 16l-5 4-5-4L2 7.500l.5-1-.5-3 1-1z" fill="#fb4a1e" /><path d="m5 3.500 3 .7h4l3-.7 1.500 3-3 5 .3 2.500L10 17l-3.800-3 .3-2.500-3-5z" fill="#fff" /><path d="m5.500 7 3 1-.5 2.500zM14.500 7l-3 1 .5 2.500zM8 13.500l2-1.200 2 1.200-2 1.500zM9.300 7h1.400v4H9.300z" fill="#fb4a1e" /></svg>, run: true },
  { icon: <svg className={ti} viewBox="0 0 20 20"><circle cx="10" cy="10" r="10" fill="#fbc116" /><path d="M1.340 5A10 10 0 0 1 18.660 5H10a5 5 0 0 0-4.330 7.500z" fill="#e33b2e" /><path d="M1.340 5A10 10 0 0 0 10 20l4.330-7.500a5 5 0 0 1-8.660 0z" fill="#229a4a" /><circle cx="10" cy="10" r="5" fill="#fff" /><circle cx="10" cy="10" r="4" fill="#2f7de9" /></svg> },
  { icon: <div className="flex h-[14px] w-5 items-center justify-center rounded-[3px] bg-[#f60000]"><svg className="h-1.5 w-1.5" viewBox="0 0 6 6"><path d="M1 0 6 3 1 6z" fill="#fff" /></svg></div>, run: true },
  { icon: <svg className={ti} viewBox="0 0 20 20"><path d="M5 4V1h10v3" fill="none" stroke="#2aa4d6" strokeWidth="1.200" /><path d="M.5 3h19v15q0 1.500-1.500 1.500H2Q.5 19.500.5 18z" fill="#eee" /><path d="M5.500 6.500h4v4h-4z" fill="#f0512a" /><path d="M10.500 6.500h4v4h-4z" fill="#7cb813" /><path d="M5.500 11.500h4v4h-4z" fill="#18a2e8" /><path d="M10.500 11.500h4v4h-4z" fill="#fbb50a" /></svg> },
  { icon: <FaSpotify className="h-[19px] w-[19px] rounded-full bg-[#132024] text-[#1ed760]" /> },
  { icon: <svg className={ti} viewBox="0 0 20 20"><rect width="20" height="20" rx="3" fill="#060a0a" /><path d="M10 3v14M4 4.500l6 5 6-5v4l-6 4-6-4zM5 9v5l5-5 5 5V9M7 16l3-4 3 4M3 7.500h14" fill="none" stroke="#22b8cd" strokeWidth="1.500" /></svg>, run: true },
  { icon: <svg className="h-5 w-5" viewBox="0 0 20 20"><path d="M0 3.500h17V20H0z" fill="#0b9290" /><path d="M3 0h17v17H3z" fill="#8f1410" /><text x="5" y="15" fill="#fff" fontFamily="Open Sans" fontSize="8.500" fontWeight="800">NX</text></svg>, run: true, active: true },
  { icon: <svg className={ti} viewBox="0 0 20 20"><circle cx="10" cy="10" r="9" fill="#3a3a3d" stroke="url(#media)" strokeWidth="1.700" /><path d="M7 5v10l7.500-5z" fill="#fff" /></svg>, run: true },
  { icon: <svg className={ti} viewBox="0 0 20 20"><path d="M7.500.5h5l.6 2.700 2 1.100 2.700-.9 2 4-2 1.700v2l2 1.700-2 4-2.700-.9-2 1.100-.6 2.500h-5l-.6-2.500-2-1.100-2.700.9-2-4 2-1.700v-2l-2-1.700 2-4 2.700.9 2-1.100z" fill="#88919a" /><circle cx="10" cy="10" r="5" fill="#eee" /><circle cx="10" cy="10" r="3" fill="#0a5db3" /></svg>, run: true },
  { icon: <svg className={ti} viewBox="0 0 20 20"><path d="M0 2h20v16H0z" fill="#0d63b8" /><path d="M0 12 3 7l3 3 3-5 3 6 4-5 4 5v7H0z" fill="#5cbcf5" /><path d="M0 14 5 11l4 4 3-4 3 2 5-1v6H0z" fill="#c2e8fb" /></svg>, run: true },
  { icon: <div className="flex h-[18px] w-[18px] items-center justify-center rounded-full bg-[#444] text-[11px] leading-none text-white">Ac</div>, run: true },
  { icon: <svg className={ti} viewBox="0 0 20 20"><circle cx="10" cy="10" r="10" fill="#1570c4" /><path d="M.3 9A10 10 0 0 1 20 9.500q0 4-4.500 4.500-3 0-2.500-2 1-2.500-1-4.500Q6 3 .3 9z" fill="url(#edgeA)" /><path d="M8 8q-3 4 1 8.500 3 2.500 8.500.2-1.500 2.600-5.500 3.200Q5 20 4 14 3.500 9 8 8z" fill="#0c4a98" /><path d="M8.500 9.500q2-2.500 4 0 .8 1.500.3 3Q13.500 15 19 13.500L17.500 16Q11 18.500 8.700 14.500 7.500 12 8.500 9.500z" fill="#16292f" /></svg>, run: true },
];

function Taskbar() {
  return (
    <div className="flex h-[60px] shrink-0 border-t border-[#3c4a4f] bg-linear-to-r from-[#14262b] via-[#14282d] to-[#182a36] text-white">
      <div className="flex w-[460px] shrink-0 items-start pt-[9px] pl-[27px]">
        <div className="relative h-[34px] w-10">
          <svg className="absolute top-3.5 left-0 h-5 w-7" viewBox="0 0 28 20"><path d="M0 7q14 3 18-7h9q3 9-3 15-6 6-14 4Q2 17 0 7z" fill="url(#moon)" /></svg>
          <div className="absolute top-0 left-[9px] flex h-[19px] w-[30px] items-center justify-center rounded-full bg-[#2c2c2c] text-[13px] tracking-[-0.2px]">13°</div>
        </div>
      </div>
      <div className="grid w-[1001px] shrink-0 grid-cols-25">
        {apps.map((a, i) => (
          <div key={i} className="flex justify-center pt-1">
            <div className={`relative flex h-[50px] w-[35px] items-center justify-center rounded ${a.active ? "bg-[#25373c] ring-1 ring-[#334449]" : ""}`}>
              {a.icon}
              {a.badge && <div className="absolute top-[10px] right-[5px] h-[5px] w-[5px] rounded-full bg-[#9ec8d2]" />}
              {a.run && <div className={`absolute bottom-px h-1 rounded-full ${a.active ? "w-[13px] bg-[#97c6d0]" : "w-[5px] bg-[#95a0a3]"}`} />}
            </div>
          </div>
        ))}
      </div>
      <div className="flex flex-1 items-center justify-end pr-[26px] text-[14px] leading-5">
        <svg className="h-2 w-3.5" viewBox="0 0 14 8" fill="none" stroke="#fff" strokeWidth="1.800"><path d="m1 7 6-6 6 6" /></svg>
        <div className="mb-0.5 ml-[26px] w-[30px] text-center text-[14.5px] tracking-[-0.4px]">ENG<br />DE</div>
        <svg className="ml-[22px] h-4 w-5" viewBox="0 0 20 16" fill="none" stroke="#fff" strokeWidth="1.500"><path d="M1 6.500Q10-2 19 6.500" stroke="#56656a" /><path d="M3.500 9q6.500-6 13 0M6 11.500q4-4 8 0" /><circle cx="10" cy="14" r="1.600" fill="#fff" stroke="none" /></svg>
        <svg className="ml-2.5 h-4 w-5" viewBox="0 0 20 16" fill="none" stroke="#fff" strokeWidth="1.300"><path d="M1 5.500h3l4-4v13l-4-4H1zM11 5.500q2 2.500 0 5M13.500 3.500q3.500 4.500 0 9" /><path d="M16.500 1.500q4 6.500 0 13" stroke="#56656a" /></svg>
        <svg className="ml-2.5 h-4 w-5" viewBox="0 0 20 16" fill="none" stroke="#fff" strokeWidth="1.400"><path d="M6 3.500h9q2 0 2 2v6q0 2-2 2H3q-2 0-2-2V7M18.500 7v3" /><path d="M2 13V8l7-3v8z" fill="#fff" stroke="none" /><path d="M4 0 1.500 5H5L3 9" /></svg>
        <div className="mb-1 ml-[19px] w-[79px] text-right text-[15px] tracking-[-0.17px] whitespace-nowrap">04:01<br />01-09-2025</div>
        <svg className="ml-3 h-[18px] w-4" viewBox="0 0 16 18"><path d="M0 14 2 11V6q0-5 6-5l5 3v7l2 3z" fill="#fff" /><path d="M5 15.500h5l-2.500 2z" fill="#fff" /><path d="M4.500 6.500h3l-3 4h3M9 5h3L9 9h3" stroke="#16292f" strokeWidth="1.300" fill="none" /><path d="M12.500.8H15l-2.500 3.500H16" stroke="#fff" fill="none" /></svg>
      </div>
    </div>
  );
}

export default function App() {
  return (
    <div className="flex h-[1080px] w-[1920px] flex-col overflow-hidden bg-white font-['Open_Sans','Noto_Sans',sans-serif]">
      <Defs />
      <header className="h-16 shrink-0 bg-linear-to-r from-[#00668a] via-[#027098] to-[#067daa]"><TitleBar /><MenuBar /></header>
      <Ribbon />
      <main className="flex h-[829px] shrink-0">
        <Rail />
        <Navigator />
        <div className="flex min-w-0 flex-1 flex-col border-l border-[#a8a8a8]"><TabBar /><Viewport /></div>
      </main>
      <footer className="flex h-[23px] shrink-0 items-center border-t border-[#a0a0a0] pl-[3px] text-[13.5px] font-bold tracking-[0.06px] text-[#222]">
        <span className="pt-px">Select objects and use MB3, or double-click an object</span>
      </footer>
      <Taskbar />
    </div>
  );
}
